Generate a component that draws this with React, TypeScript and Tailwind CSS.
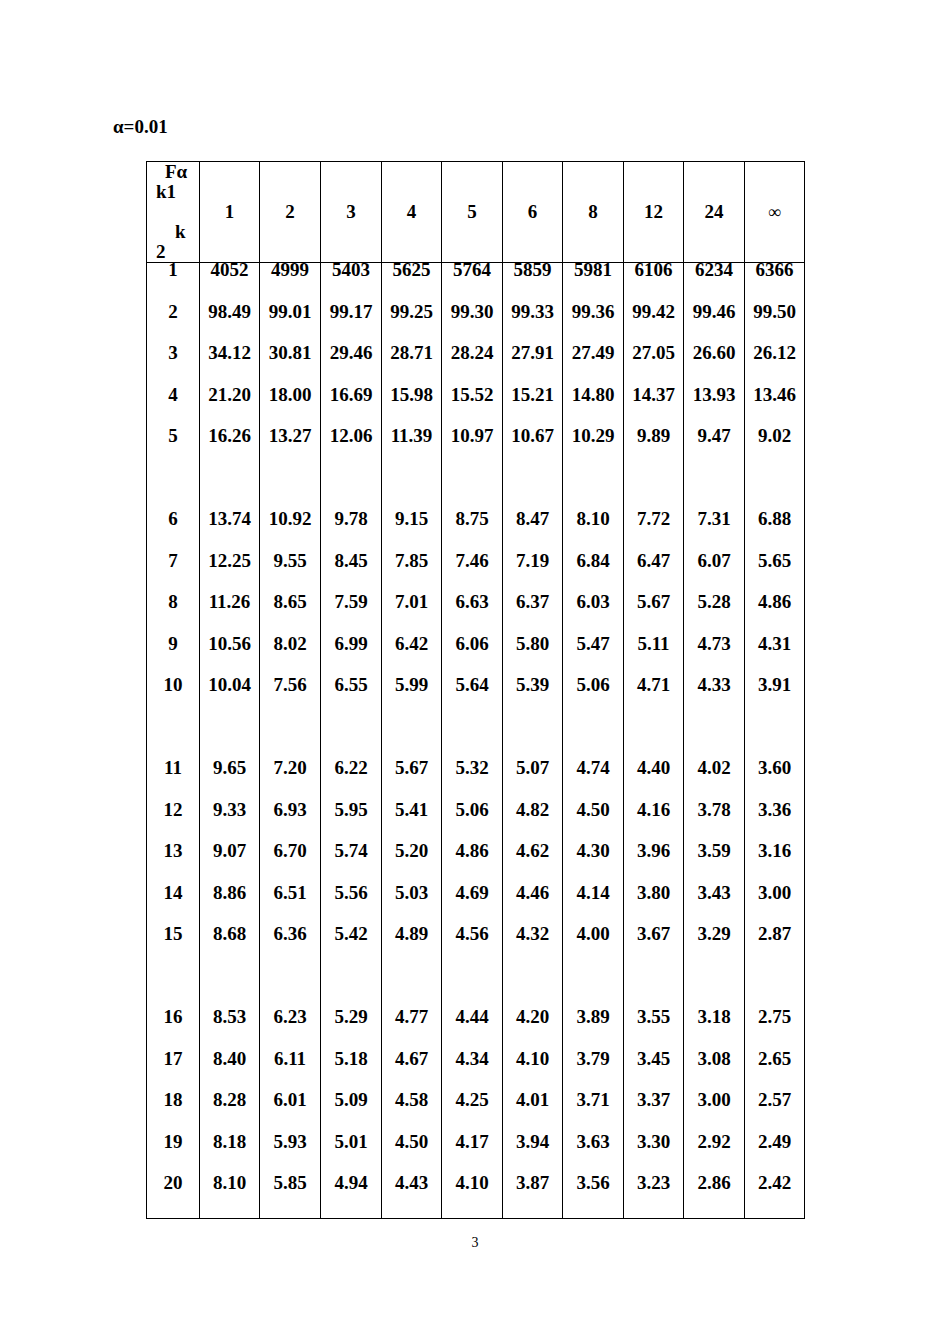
const widths = [
  "w-[53px]",
  "w-[60px]",
  "w-[61px]",
  "w-[61px]",
  "w-[60px]",
  "w-[61px]",
  "w-[60px]",
  "w-[61px]",
  "w-[60px]",
  "w-[61px]",
  "w-[60px]",
]

const heads = ["1", "2", "3", "4", "5", "6", "8", "12", "24", "∞"]

const rows: string[][] = [
  ["1", "4052", "4999", "5403", "5625", "5764", "5859", "5981", "6106", "6234", "6366"],
  ["2", "98.49", "99.01", "99.17", "99.25", "99.30", "99.33", "99.36", "99.42", "99.46", "99.50"],
  ["3", "34.12", "30.81", "29.46", "28.71", "28.24", "27.91", "27.49", "27.05", "26.60", "26.12"],
  ["4", "21.20", "18.00", "16.69", "15.98", "15.52", "15.21", "14.80", "14.37", "13.93", "13.46"],
  ["5", "16.26", "13.27", "12.06", "11.39", "10.97", "10.67", "10.29", "9.89", "9.47", "9.02"],
  [],
  ["6", "13.74", "10.92", "9.78", "9.15", "8.75", "8.47", "8.10", "7.72", "7.31", "6.88"],
  ["7", "12.25", "9.55", "8.45", "7.85", "7.46", "7.19", "6.84", "6.47", "6.07", "5.65"],
  ["8", "11.26", "8.65", "7.59", "7.01", "6.63", "6.37", "6.03", "5.67", "5.28", "4.86"],
  ["9", "10.56", "8.02", "6.99", "6.42", "6.06", "5.80", "5.47", "5.11", "4.73", "4.31"],
  ["10", "10.04", "7.56", "6.55", "5.99", "5.64", "5.39", "5.06", "4.71", "4.33", "3.91"],
  [],
  ["11", "9.65", "7.20", "6.22", "5.67", "5.32", "5.07", "4.74", "4.40", "4.02", "3.60"],
  ["12", "9.33", "6.93", "5.95", "5.41", "5.06", "4.82", "4.50", "4.16", "3.78", "3.36"],
  ["13", "9.07", "6.70", "5.74", "5.20", "4.86", "4.62", "4.30", "3.96", "3.59", "3.16"],
  ["14", "8.86", "6.51", "5.56", "5.03", "4.69", "4.46", "4.14", "3.80", "3.43", "3.00"],
  ["15", "8.68", "6.36", "5.42", "4.89", "4.56", "4.32", "4.00", "3.67", "3.29", "2.87"],
  [],
  ["16", "8.53", "6.23", "5.29", "4.77", "4.44", "4.20", "3.89", "3.55", "3.18", "2.75"],
  ["17", "8.40", "6.11", "5.18", "4.67", "4.34", "4.10", "3.79", "3.45", "3.08", "2.65"],
  ["18", "8.28", "6.01", "5.09", "4.58", "4.25", "4.01", "3.71", "3.37", "3.00", "2.57"],
  ["19", "8.18", "5.93", "5.01", "4.50", "4.17", "3.94", "3.63", "3.30", "2.92", "2.49"],
  ["20", "8.10", "5.85", "4.94", "4.43", "4.10", "3.87", "3.56", "3.23", "2.86", "2.42"],
]

export default function App() {
  return (
    <div className="w-[950px] h-[1344px] bg-white text-black font-['Liberation_Serif',serif]">
      {/* title */}
      <div className="pt-[116px] pl-[113px] text-[19px] leading-[22px] font-bold">α=0.01</div>

      {/* F table */}
      <div className="mt-[23px] ml-[146px] w-[659px] border-l border-t border-b border-black font-bold text-[19px]">
        {/* header */}
        <div className="flex h-[101px] border-b border-black">
          <div className={`${widths[0]} border-r border-black leading-[20px]`}>
            <div className="pl-[18px]">Fα</div>
            <div className="pl-[9px]">k1</div>
            <div className="h-[20px]" />
            <div className="pl-[28px]">k</div>
            <div className="pl-[9px]">2</div>
          </div>
          {heads.map((h, i) => (
            <div
              key={h}
              className={`${widths[i + 1]} border-r border-black flex items-center justify-center ${
                h === "∞" ? "font-normal text-[18px]" : ""
              }`}
            >
              {h}
            </div>
          ))}
        </div>

        {/* body */}
        <div className="flex">
          {widths.map((w, c) => (
            <div key={c} className={`${w} border-r border-black flex flex-col`}>
              {rows.map((r, i) => (
                <div key={i} className="h-[41.5px] leading-[14px] text-center">
                  {r[c] ?? ""}
                </div>
              ))}
            </div>
          ))}
        </div>
      </div>

      {/* page number */}
      <div className="mt-[17px] text-center text-[14px] leading-[14px]">3</div>
    </div>
  )
}
